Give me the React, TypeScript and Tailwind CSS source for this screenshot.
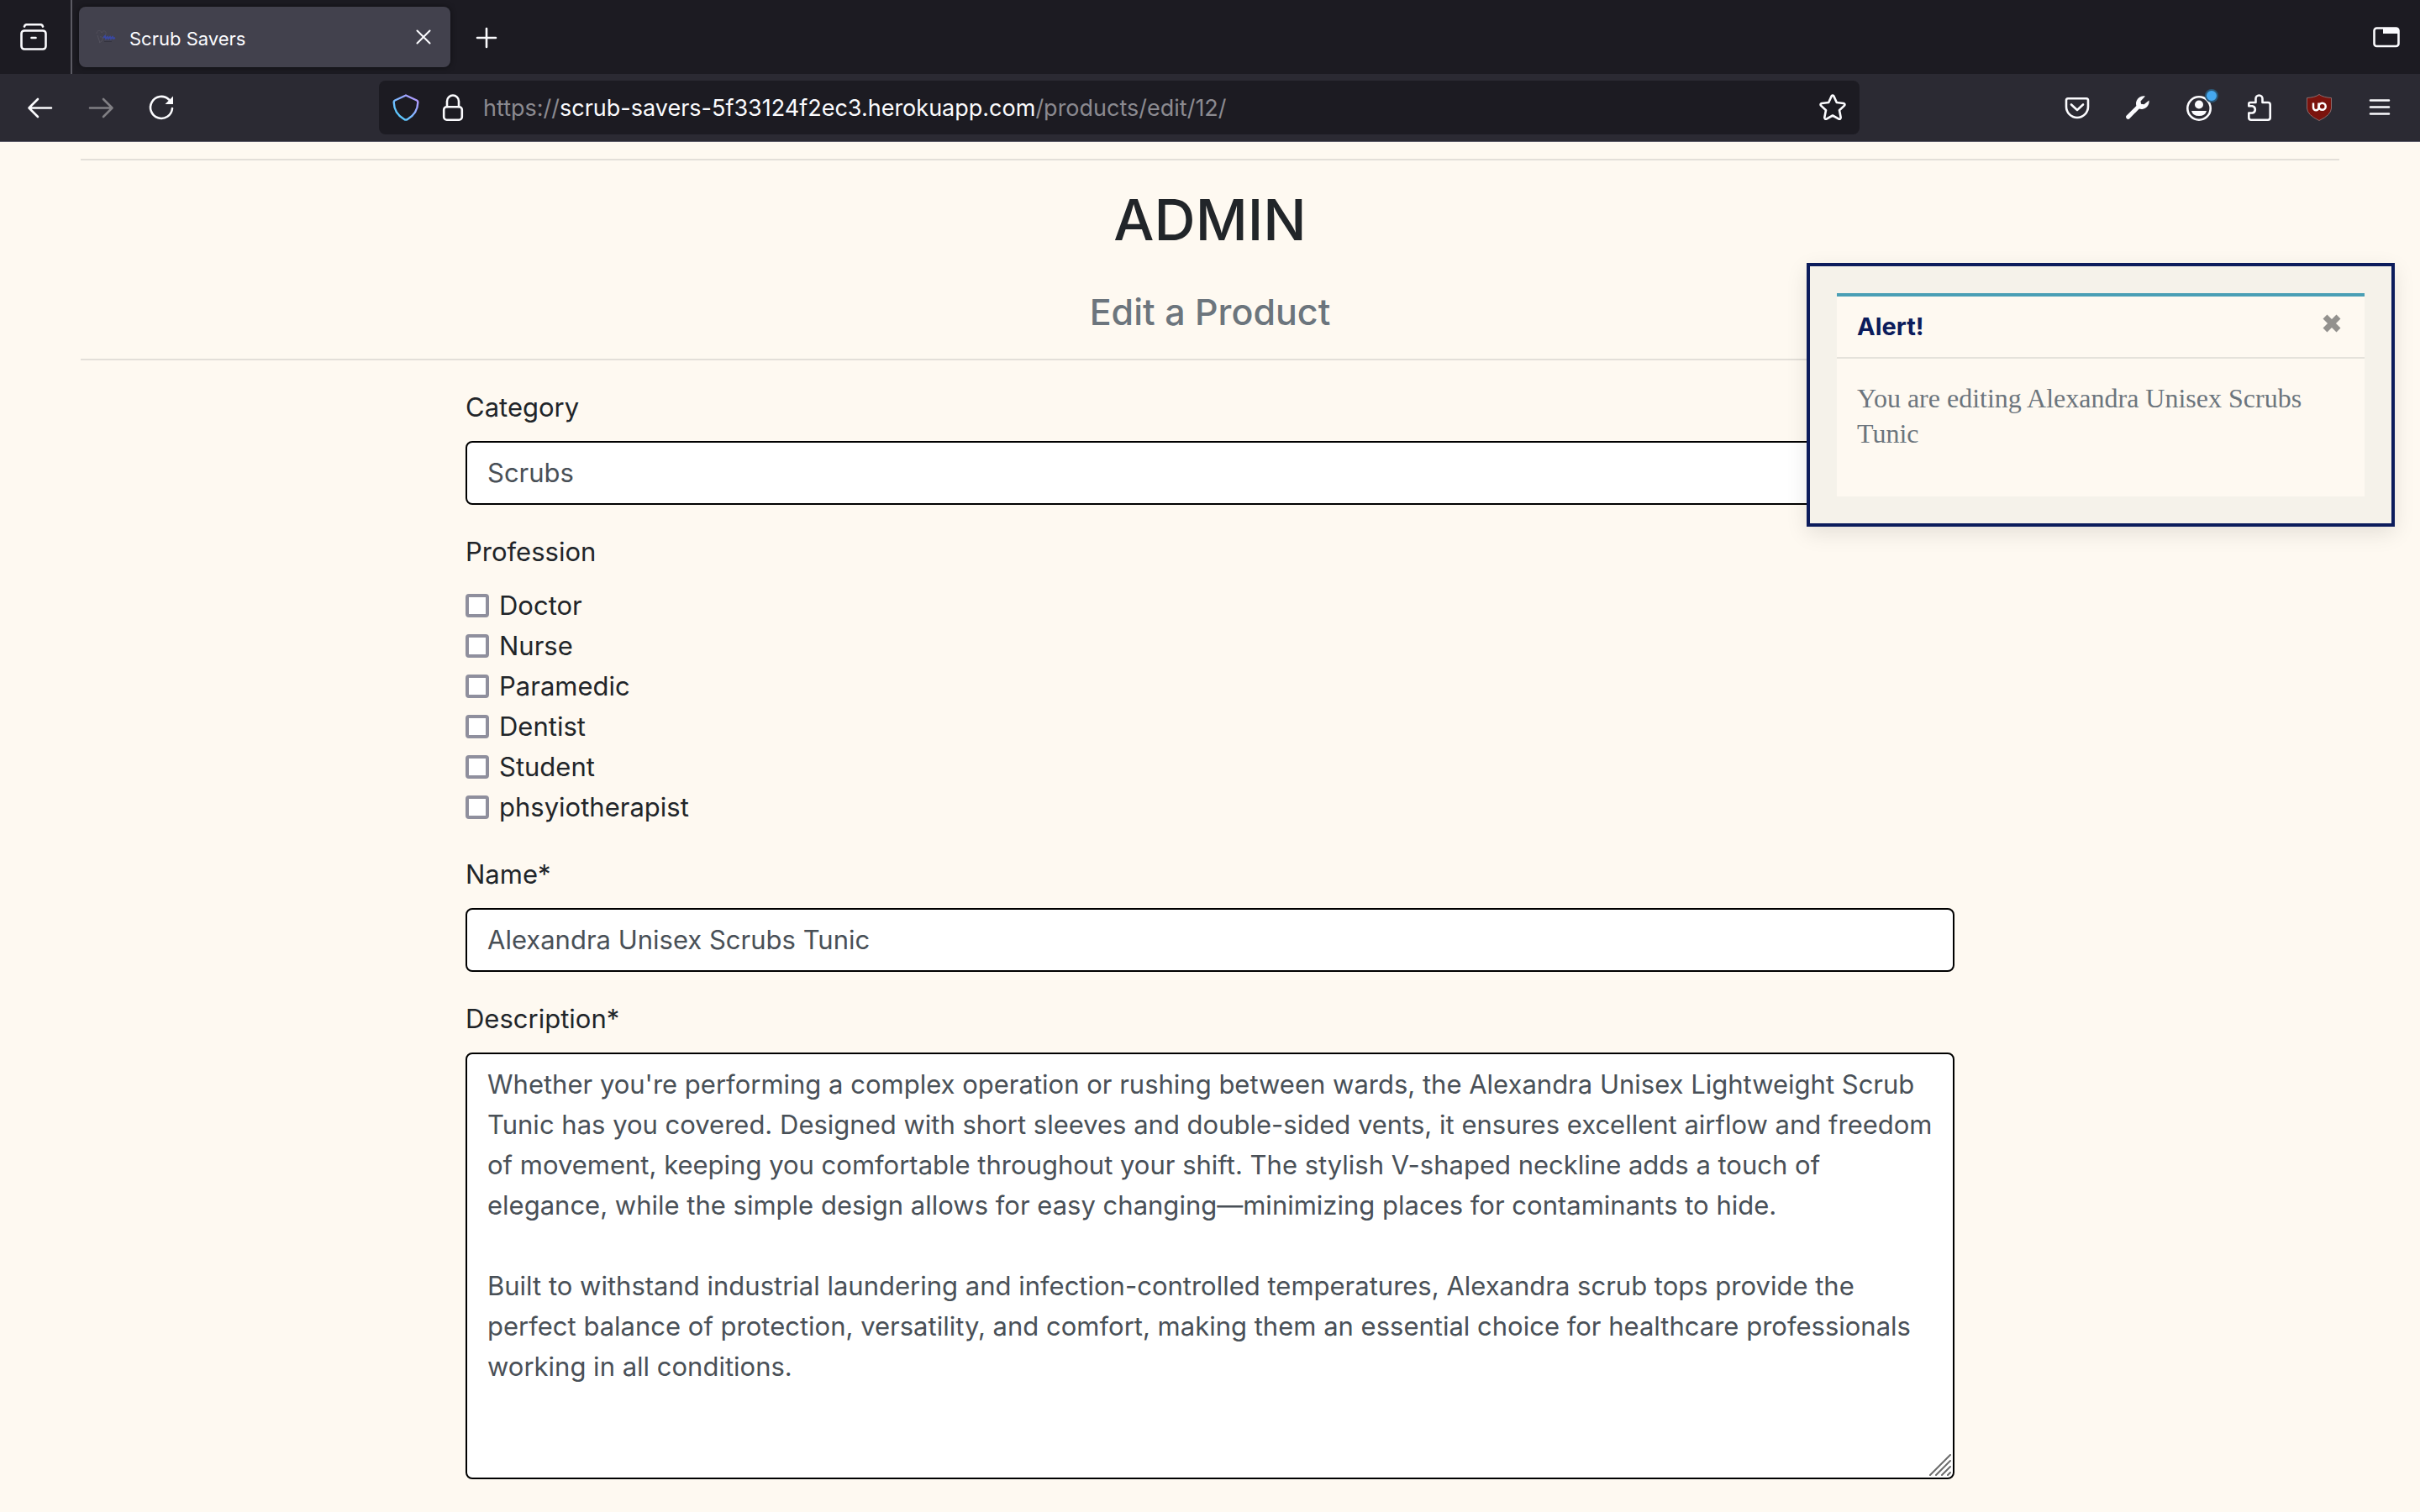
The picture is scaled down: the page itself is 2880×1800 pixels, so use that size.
import type { ReactNode } from "react";

const PROFESSIONS = ["Doctor", "Nurse", "Paramedic", "Dentist", "Student", "phsyiotherapist"];

const DESCRIPTION = `Whether you're performing a complex operation or rushing between wards, the Alexandra Unisex Lightweight Scrub Tunic has you covered. Designed with short sleeves and double-sided vents, it ensures excellent airflow and freedom of movement, keeping you comfortable throughout your shift. The stylish V-shaped neckline adds a touch of elegance, while the simple design allows for easy changing—minimizing places for contaminants to hide.

Built to withstand industrial laundering and infection-controlled temperatures, Alexandra scrub tops provide the perfect balance of protection, versatility, and comfort, making them an essential choice for healthcare professionals working in all conditions.`;

const FIELD =
  "block w-full rounded-lg border-2 border-black bg-white px-6 py-3 text-[31px] leading-[48px] text-[#495057] outline-none";

function Icon({ children }: { children: ReactNode }) {
  return (
    <svg
      viewBox="0 0 32 32"
      className="size-8"
      fill="none"
      stroke="currentColor"
      strokeWidth="2.6"
      strokeLinecap="round"
      strokeLinejoin="round"
      aria-hidden="true"
    >
      {children}
    </svg>
  );
}

function IconButton({ label, dim, children }: { label: string; dim?: boolean; children: ReactNode }) {
  return (
    <button
      type="button"
      aria-label={label}
      className={dim ? "flex size-16 items-center justify-center text-[#807f84]" : "flex size-16 items-center justify-center text-[#fbfbfe]"}
    >
      {children}
    </button>
  );
}

function TabBar() {
  return (
    <div className="flex h-[88px] items-center bg-[#1c1b22]">
      <div className="flex h-full w-[86px] items-center justify-center border-r-2 border-[#5b5a63] pr-1">
        <button type="button" aria-label="Firefox View" className="flex size-16 items-center justify-center text-[#fbfbfe]">
          <Icon>
            <path d="M5 3.6C5.400 1.800 6.400 1.200 8 1.200H24C25.600 1.200 26.600 1.800 27 3.600" />
            <rect x="1.500" y="8.500" width="29" height="22" rx="3.500" />
            <path d="M13.500 17H18.500" />
          </Icon>
        </button>
      </div>
      <div className="ml-2 flex h-[72px] w-[442px] items-center rounded-lg bg-[#42414d] pl-5 pr-3 shadow-[0_0_6px_rgba(0,0,0,0.5)]">
        <svg viewBox="0 0 24 18" className="h-[18px] w-6" fill="none" aria-hidden="true">
          <path d="M1 5C1 1 6 0 7 4C9 0 13 2 12 6L8 11M2 7L5 16M5 9C8 8 9 11 7 14L4 16" stroke="#52505c" strokeWidth="1" />
          <path d="M9 10L11 8L12 11L14 9L15 11L17 9L18 11L20 9L21 11L23 10" stroke="#3a48a0" strokeWidth="2" />
          <path d="M10 14.500H19" stroke="#34333f" strokeWidth="1" />
        </svg>
        <span className="ml-4 flex-1 pt-1 text-[22px] leading-8 text-[#fbfbfe]">Scrub Savers</span>
        <button type="button" aria-label="Close tab" className="flex size-10 items-center justify-center text-[#fbfbfe]">
          <svg viewBox="0 0 20 20" className="size-5" fill="none" stroke="currentColor" strokeWidth="2" strokeLinecap="round" aria-hidden="true">
            <path d="M2.500 2.500L17.500 17.500M17.500 2.500L2.500 17.500" />
          </svg>
        </button>
      </div>
      <div className="ml-3">
        <IconButton label="New tab">
          <Icon>
            <path d="M15 6V28M4 17H26" />
          </Icon>
        </IconButton>
      </div>
      <div className="ml-auto mr-2">
        <IconButton label="List all tabs">
          <Icon>
            <rect x="1.500" y="5.500" width="29" height="21.500" rx="3" />
            <path d="M12 5H28Q31 5 31 8V12H12Z" fill="currentColor" stroke="none" />
          </Icon>
        </IconButton>
      </div>
    </div>
  );
}

function AddressBar() {
  return (
    <div className="flex h-16 w-[1762px] items-center rounded-lg bg-[#1c1b22] px-4">
      <button type="button" aria-label="Tracking protection">
        <svg viewBox="0 0 32 32" className="size-8" fill="none" aria-hidden="true">
          <defs>
            <linearGradient id="shield" x1="0" y1="1" x2="1" y2="0">
              <stop offset="0.200" stopColor="#5cc8ff" />
              <stop offset="0.900" stopColor="#b39aff" />
            </linearGradient>
          </defs>
          <path
            d="M16 1.500L29 7.500Q30.500 8.300 30.300 10Q30 23 18 30Q16 31.300 14 30Q2 23 1.700 10Q1.500 8.300 3 7.500Z"
            stroke="url(#shield)"
            strokeWidth="2.400"
            strokeLinejoin="round"
          />
        </svg>
      </button>
      <button type="button" aria-label="Connection secure" className="ml-6 text-[#fbfbfe]">
        <Icon>
          <rect x="5.200" y="15.200" width="21.600" height="15.500" rx="3.500" />
          <path d="M9 15V8.500A7 7 0 0 1 23 8.500V15" />
        </Icon>
      </button>
      <div role="textbox" aria-label="Address" className="ml-5 flex-1 pt-0.5 text-[27px] leading-10 text-[#8b8a90]">
        https://<span className="text-[#fbfbfe]">scrub-savers-5f33124f2ec3.herokuapp.com</span>/products/edit/12/
      </div>
      <button type="button" aria-label="Bookmark this page" className="text-[#fbfbfe]">
        <Icon>
          <path d="M14.700 2.400Q16 0.700 17.300 2.400L20.800 10L29 11Q31.200 11.700 30 13.600L24 19.300L25.700 27.800Q25.600 30.300 23.300 29.700L16 25.500L8.700 29.700Q6.400 30.300 6.300 27.800L8 19.300L2 13.600Q0.800 11.700 3 11L11.200 10Z" />
        </Icon>
      </button>
    </div>
  );
}

function Toolbar() {
  return (
    <div className="flex h-[81px] items-center border-b border-[#5b5a68] bg-[#2b2a33] px-4">
      <div className="flex w-[435px] gap-2">
        <IconButton label="Back">
          <Icon>
            <path d="M29 16.500H3M13 6L2.500 16.500L13 27" />
          </Icon>
        </IconButton>
        <IconButton label="Forward" dim>
          <Icon>
            <path d="M3 16.500H29M19 6L29.500 16.500L19 27" />
          </Icon>
        </IconButton>
        <IconButton label="Reload">
          <Icon>
            <path d="M29 17A13 13 0 1 1 25 6.500" />
            <path d="M30 2.500V12H20.500Z" fill="currentColor" stroke="none" />
          </Icon>
        </IconButton>
      </div>
      <AddressBar />
      <div className="ml-auto flex gap-2">
        <IconButton label="Save to Pocket">
          <Icon>
            <path d="M5 5.200H27Q29 5.200 29 7.500V15A13 13 0 0 1 3 15V7.500Q3 5.200 5 5.200Z" />
            <path d="M9 12.500L16 19L23 12.500" />
          </Icon>
        </IconButton>
        <IconButton label="Developer tools">
          <Icon>
            <path
              d="M25 2.600A9 9 0 0 0 14.400 14L2.300 26Q1.500 28 3 29.300Q4.500 30.500 6 29.500L17.800 17.500A9 9 0 0 0 29.500 7.500L23.600 12.300L20 11.800L19.500 8.500Z"
              fill="currentColor"
              stroke="none"
            />
          </Icon>
        </IconButton>
        <div className="relative">
          <IconButton label="Account">
            <Icon>
              <circle cx="17" cy="17" r="13.700" />
              <circle cx="17" cy="12.500" r="5" fill="currentColor" stroke="none" />
              <path d="M8 20H26Q24.500 26 17 26Q9.500 26 8 20Z" fill="currentColor" stroke="none" />
            </Icon>
          </IconButton>
          <span className="absolute right-2 top-2.5 size-4 rounded-full border-2 border-[#2b5878] bg-[#45a8f0]" />
        </div>
        <IconButton label="Extensions">
          <Icon>
            <path d="M6 10H12.500V5.500A4 4 0 0 1 20.500 5.500V10H27Q29.700 10 29.700 12.700V28Q29.700 30.700 27 30.700H7Q4.300 30.700 4.300 28V22.500H8.500A4.200 4.200 0 0 0 8.500 14.300H4.300V11.500Q4.300 10 6 10Z" />
          </Icon>
        </IconButton>
        <IconButton label="uBlock Origin">
          <svg viewBox="0 0 32 32" className="size-8" fill="none" aria-hidden="true">
            <path d="M16 0.500Q21 4 30.500 4.500V17Q30 25 16 31.500Q2 25 1.500 17V4.500Q11 4 16 0.500Z" fill="#7b130d" stroke="#8a6a6c" strokeWidth="1" />
            <path d="M9 10.500V16A3 3 0 0 0 15.500 16V10.500" stroke="#fff" strokeWidth="2.500" />
            <circle cx="19.700" cy="14.800" r="4" stroke="#fff" strokeWidth="2.500" />
          </svg>
        </IconButton>
        <IconButton label="Open application menu">
          <Icon>
            <path d="M5 7.500H27M5 15.500H27M5 23.500H27" />
          </Icon>
        </IconButton>
      </div>
    </div>
  );
}

function Toast() {
  return (
    <aside className="absolute right-[30px] top-36 w-[700px] border-4 border-[#0c1c5c] bg-[#f5f2ea] p-8 shadow-[0_8px_24px_rgba(0,0,0,0.1)]">
      <div className="border-t-4 border-[#4a9fb5] bg-[#fef9f1]">
        <div className="flex h-[74px] items-center justify-between border-b-2 border-[#e5e2db] px-6">
          <strong className="text-[29px] font-bold leading-10 text-[#0c1c5c]">Alert!</strong>
          <button type="button" aria-label="Close" className="mb-2 mr-1 text-[#93918e]">
            <svg viewBox="0 0 22 22" className="size-[22px]" fill="none" stroke="currentColor" strokeWidth="7" aria-hidden="true">
              <path d="M3 3L19 19M19 3L3 19" />
            </svg>
          </button>
        </div>
        <p className="px-6 pb-[54px] pt-[26px] font-['Liberation_Serif',serif] text-[32px] leading-[42px] text-[#6c757d]">
          You are editing Alexandra Unisex Scrubs Tunic
        </p>
      </div>
    </aside>
  );
}

export default function App() {
  return (
    <div className="flex min-h-screen flex-col bg-[#fef9f1] font-['Inter',sans-serif] text-[#212529]">
      <header>
        <TabBar />
        <Toolbar />
      </header>
      <main className="relative flex-1 px-24 pb-8 pt-5">
        <hr className="border-t-2 border-[#e3dfd9]" />
        <div className="pt-8 text-center">
          <h1 className="text-[68px] font-medium leading-[76px]">ADMIN</h1>
          <h2 className="mb-6 mt-10 text-[43px] font-medium leading-[64px] text-[#6c757d]">Edit a Product</h2>
        </div>
        <hr className="border-t-2 border-[#e3dfd9]" />
        <form className="mx-auto mt-8 flex w-2/3 flex-col gap-8 px-2.5 text-[31px] leading-[48px]">
          <div>
            <label htmlFor="category" className="mb-4 block">Category</label>
            <select id="category" className={`${FIELD} appearance-none`} defaultValue="Scrubs">
              <option>Scrubs</option>
            </select>
          </div>
          <fieldset>
            <legend className="mb-4">Profession</legend>
            {PROFESSIONS.map((name) => (
              <label key={name} className="flex items-center gap-3">
                <input type="checkbox" className="size-7 appearance-none rounded border-4 border-[#8f8f9d] bg-white" />
                {name}
              </label>
            ))}
          </fieldset>
          <div>
            <label htmlFor="name" className="mb-4 block">Name*</label>
            <input id="name" type="text" className={FIELD} defaultValue="Alexandra Unisex Scrubs Tunic" />
          </div>
          <div>
            <label htmlFor="description" className="mb-4 block">Description*</label>
            <div className="relative">
              <textarea id="description" rows={10} className={`${FIELD} resize-none overflow-hidden`} defaultValue={DESCRIPTION} />
              <svg viewBox="0 0 26 26" className="absolute bottom-1 right-1 size-[26px]" stroke="#6b6b6b" strokeWidth="2" strokeLinecap="round" aria-hidden="true">
                <path d="M1 25L25 1M8 25L25 8M15 25L25 15M22 25L25 22" />
              </svg>
            </div>
          </div>
        </form>
        <Toast />
      </main>
    </div>
  );
}
